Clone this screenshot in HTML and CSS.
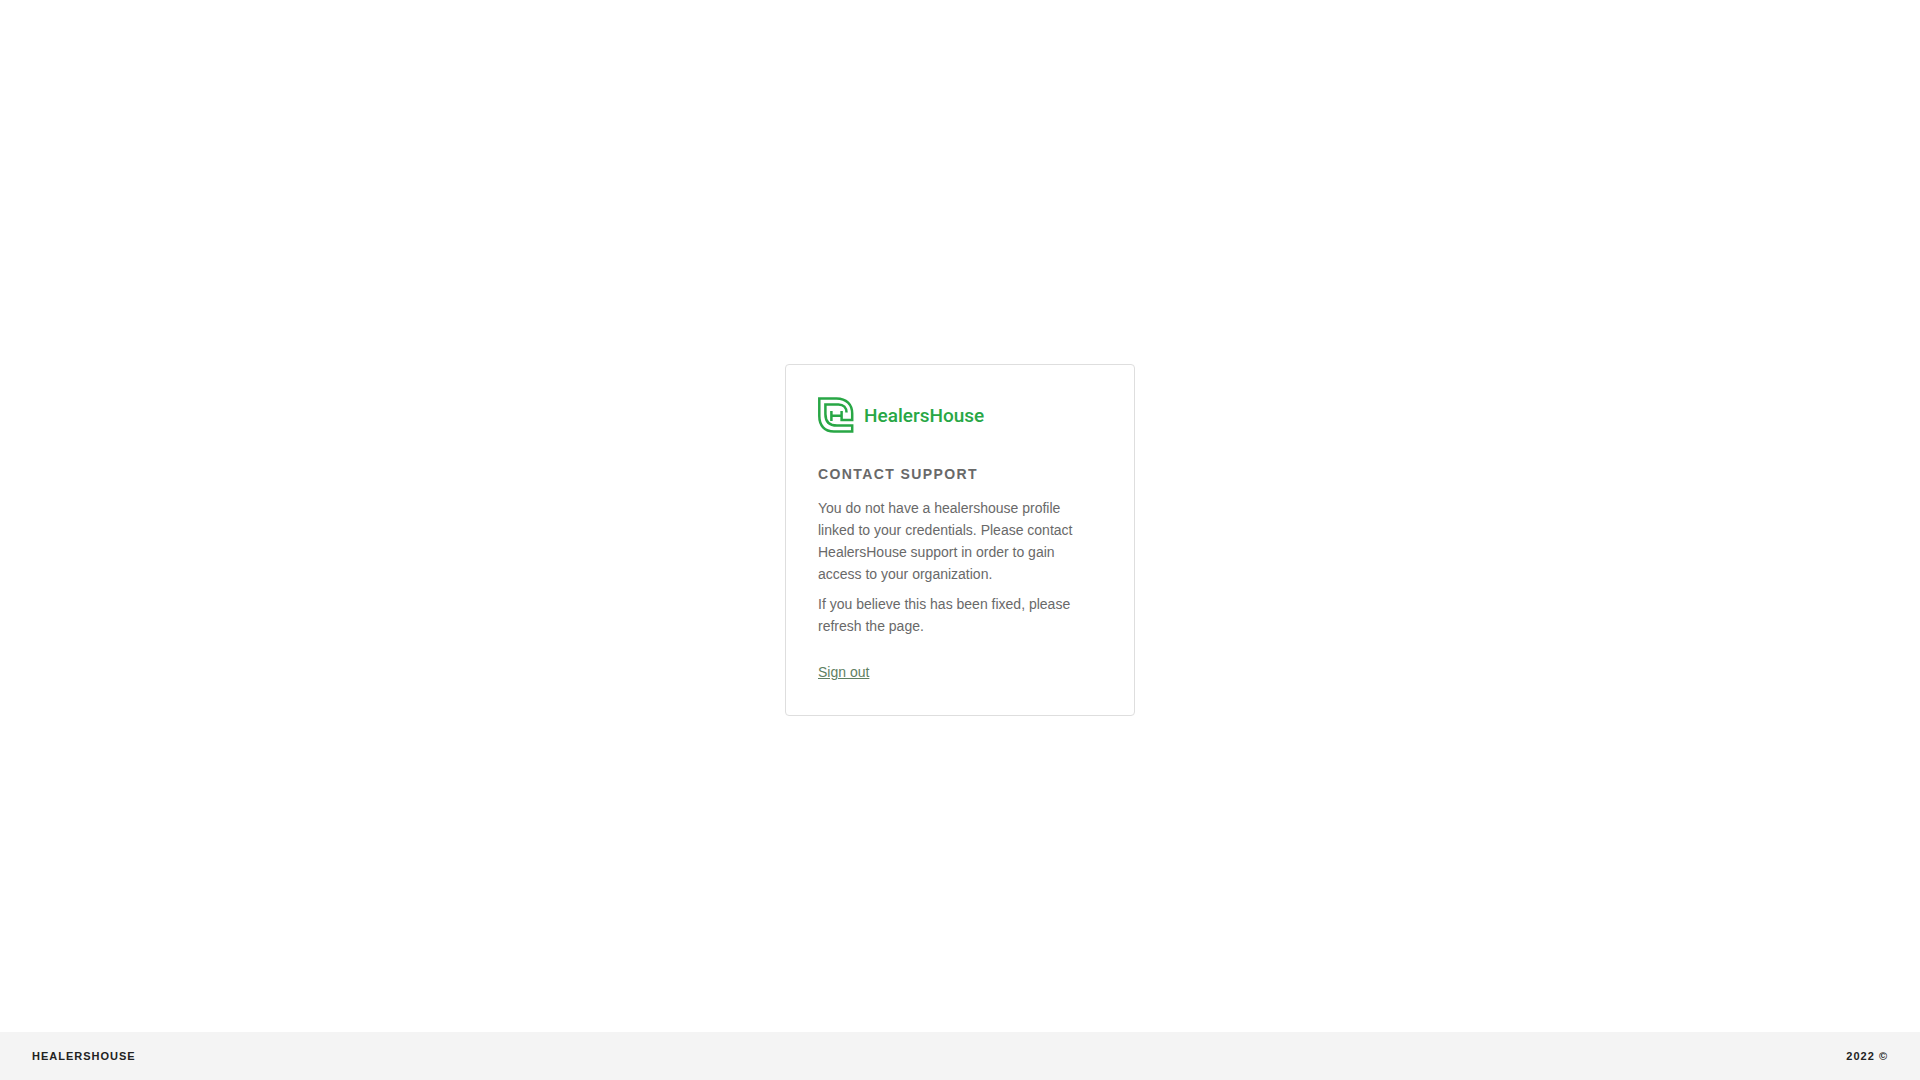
FILE: index.html
```html
<!DOCTYPE html>
<html lang="en">
<head>
<meta charset="utf-8">
<meta name="viewport" content="width=device-width, initial-scale=1">
<title>HealersHouse</title>
<link rel="stylesheet" href="styles.css">
</head>
<body>
<main class="main">
  <section class="card">
    <div class="logo">
      <svg class="logo-mark" viewBox="0 0 36 36" aria-hidden="true">
        <path d="M28.5 15.5C28.5 10.5 25.5 7.4 20.5 7.4H7.4V17C7.4 24.5 11.5 28.6 19 28.6H34.2V34.5H16C6.5 34.5 1.3 28.5 1.3 19V1.4H18.5C28.5 1.4 34.2 7.5 34.2 16.5V22.9H23.6V14M13.4 14V24M13.4 18.8H23.6"/>
      </svg>
      <span class="logo-name">HealersHouse</span>
    </div>
    <h1 class="title">Contact support</h1>
    <p class="text">You do not have a healershouse profile linked to your credentials. Please contact HealersHouse support in order to gain access to your organization.</p>
    <p class="text">If you believe this has been fixed, please refresh the page.</p>
    <a class="sign-out" href="#">Sign out</a>
  </section>
</main>
<footer class="footer">
  <span>HEALERSHOUSE</span>
  <span>2022 ©</span>
</footer>
</body>
</html>
```
FILE: styles.css
```css
* {
  box-sizing: border-box;
}

body {
  display: flex;
  flex-direction: column;
  min-height: 100vh;
  margin: 0;
  background: #fff;
  color: #696969;
  font: 14px/22px "Liberation Sans", Arial, sans-serif;
}

.main {
  flex: 1;
  display: flex;
  align-items: center;
  justify-content: center;
  /* keeps the card centred on the window, footer included */
  padding-top: 48px;
}

.card {
  width: 350px;
  padding: 32px 40px 32px 32px;
  border: 1px solid #dedede;
  border-radius: 4px;
}

.logo {
  display: flex;
  align-items: center;
  gap: 10px;
  margin-bottom: 30px;
  color: #28a745;
}

.logo-mark {
  width: 36px;
  height: 36px;
  fill: none;
  stroke: currentColor;
  stroke-width: 2.5;
}

.logo-name {
  padding-top: 2px;
  font: 500 19px/22px Roboto, sans-serif;
}

.title {
  margin: 0 0 12px;
  font-size: 14px;
  line-height: 22px;
  letter-spacing: 0.1em;
  text-transform: uppercase;
}

.text {
  margin: 0 0 8px;
}

.sign-out {
  display: inline-block;
  margin-top: 16px;
  color: #5e7f62;
  vertical-align: top;
}

.footer {
  display: flex;
  align-items: center;
  justify-content: space-between;
  height: 48px;
  padding: 0 32px;
  background: #f4f4f4;
  color: #222;
  font-size: 11px;
  font-weight: 700;
  letter-spacing: 1px;
}
```
